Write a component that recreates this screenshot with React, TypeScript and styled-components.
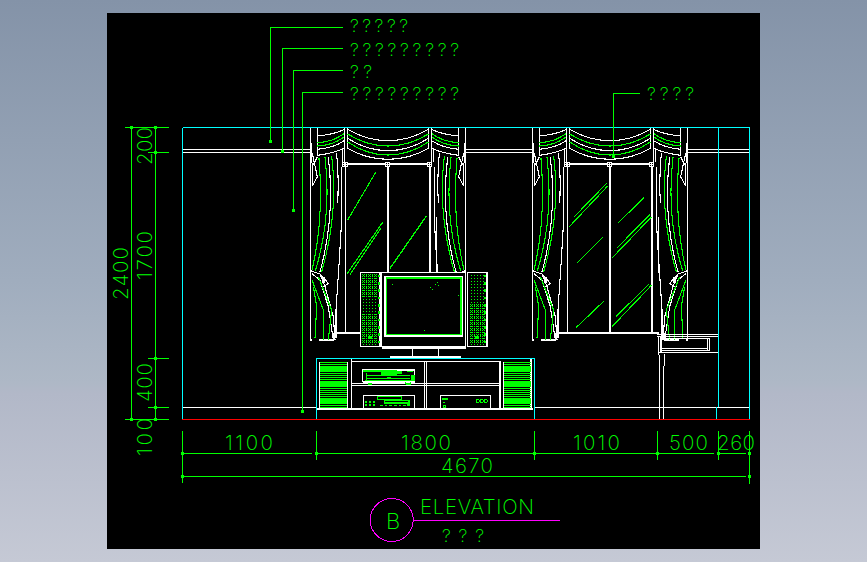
import React from "react";
import styled, { createGlobalStyle } from "styled-components";

const Global = createGlobalStyle`
  html, body { margin: 0; padding: 0; height: 100%; overflow: hidden; }
  #root { height: 100%; }
`;

const GREEN = "#00ff00";
const WHITE = "#ffffff";
const CYAN = "#00ffff";
const RED = "#ff0000";
const MAGENTA = "#ff00ff";

const Stage = styled.main`
  box-sizing: border-box;
  width: 867px;
  height: 562px;
  padding: 13px 107px;
  display: flex;
  background: linear-gradient(180deg, #8493a8 0%, #a0adbe 50%, #aeb8c6 68%, #b2b8c8 70%, #c5c9d5 100%);
`;

const Viewport = styled.section`
  flex: 1;
  background: #000000;
  display: flex;
`;

const Drawing = styled.svg`
  display: block;
  width: 653px;
  height: 536px;
  shape-rendering: crispEdges;
`;

const Wire = styled.path<{ $c?: string; $w?: number }>`
  fill: none;
  stroke: ${(p) => p.$c ?? WHITE};
  stroke-width: ${(p) => p.$w ?? 1};
`;

const Block = styled.rect<{ $c?: string }>`
  fill: ${(p) => p.$c ?? GREEN};
`;

const Box = styled.rect<{ $c?: string; $w?: number }>`
  fill: #000000;
  stroke: ${(p) => p.$c ?? WHITE};
  stroke-width: ${(p) => p.$w ?? 3.3};
`;

const Ring = styled.circle<{ $c?: string }>`
  fill: none;
  stroke: ${(p) => p.$c ?? GREEN};
  stroke-width: 3.3;
`;

const Label = styled.text<{ $s?: number }>`
  font-family: "Inter", "Liberation Sans", sans-serif;
  font-weight: 200;
  font-size: ${(p) => p.$s ?? 20.5}px;
  fill: ${GREEN};
`;

const Zoomed: React.FC<{ x: number; y: number; children: React.ReactNode }> = ({ x, y, children }) => (
  <g transform={`translate(${x} ${y}) scale(0.33333)`}>{children}</g>
);

const Dot: React.FC<{ x: number; y: number }> = ({ x, y }) => (
  <Block x={Math.floor(x) - 1} y={Math.floor(y) - 1} width={3} height={3} />
);

const Finial: React.FC<{ x: number; y: number }> = ({ x, y }) => (
  <g>
    <Block $c={WHITE} x={x - 8} y={y - 8} width={17} height={17} />
    {[-5, 3].map((a) =>
      [-5, 3].map((b) => <Block key={`${a}${b}`} $c="#000" x={x + a} y={y + b} width={3} height={3} />)
    )}
  </g>
);

const HalfDrape: React.FC = () => (
  <g>
    <Wire $w={3.3} d="M31 22V660M52 22V105M133 22V88M143 22V88M133 88V125M127 88V125" />
    <Wire $w={3.3} d="M52 47Q100 45 133 28M52 88Q100 84 133 62M52 106Q100 100 133 85" />
    <Wire $w={3.3} $c={GREEN} d="M52 68Q100 66 133 40M52 78Q100 76 133 50" />
    <Wire $w={3.3} d="M143 28Q200 62 264 62M143 55Q200 92 264 92M143 85Q200 118 264 118" />
    <Wire $w={3.3} $c={GREEN} d="M143 42Q200 78 264 78M143 66Q200 105 264 105" />
    <Wire $w={5} d="M34 70V130" />
    <Wire $w={3.3} d="M37 100L52 170L38 197L37 130M52 110L40 135" />
    <Wire $w={3.3} $c={GREEN} d="M57 115Q72 300 36 450M75 112Q96 290 46 452M95 108Q116 280 65 455" />
    <Wire $w={3.3} d="M85 110Q106 290 60 455M110 100Q118 200 112 250M125 140V300L118 420L108 570V655" />
    <Wire $w={3.3} d="M31 452L60 462L85 490L70 500M35 460L60 480L85 560L100 660M60 462L75 500L100 590L105 660" />
    <Block $c={WHITE} x={65} y={472} width={9} height={18} />
    <Wire $w={3.3} d="M31 660H37M58 660H100V640" />
    <Wire $w={3.3} $c={GREEN} d="M36 480L70 570V660M55 470L95 570L85 660M40 500L50 560L45 655" />
  </g>
);

const WindowBay: React.FC<{ x: number }> = ({ x }) => (
  <Zoomed x={x} y={120}>
    <HalfDrape />
    <g transform="translate(528 0) scale(-1 1)">
      <HalfDrape />
    </g>
    <Wire $w={3.3} d="M137 125V640" />
    <Wire $w={6} d="M135 133H392M264 133V640M390 133V640M110 640H412" />
    <Wire $w={5} d="M410 290V460" />
    <Finial x={135} y={133} />
    <Finial x={262} y={133} />
    <Finial x={388} y={133} />
  </Zoomed>
);

const Speaker: React.FC<{ x: number; dense: [number, number][]; edge: number; big: number }> = ({ x, dense, edge, big }) => (
  <g>
    <Box x={x} y={37} width={59} height={223} />
    <rect x={x + 6} y={40} width={48} height={216} fill="url(#sparse)" />
    {dense.map(([top, h]) => (
      <rect key={top} x={x + 6} y={top} width={48} height={h} fill="url(#dense)" />
    ))}
    <Wire $w={6} $c={GREEN} strokeDasharray="8 14" d={`M${edge} 44V250`} />
    <Block x={big} y={227} width={12} height={9} />
  </g>
);

const louvers = Array.from({ length: 22 }, (_, i) => 308 + i * 6.4);

const App: React.FC = () => (
  <>
    <Global />
    <Stage>
      <Viewport>
        <Drawing viewBox="107 13 653 536" xmlns="http://www.w3.org/2000/svg">
          <defs>
            <pattern id="sparse" width="9" height="9" patternUnits="userSpaceOnUse">
              <rect width="3" height="3" fill={GREEN} />
            </pattern>
            <pattern id="dense" width="6" height="6" patternUnits="userSpaceOnUse">
              <rect width="3" height="3" fill={GREEN} />
            </pattern>
          </defs>

          {/* room outline */}
          <Wire d="M182 149.5H310M182 152.5H310M466 149.5H533M466 152.5H533M688 149.5H750M688 152.5H750M182 407.5H317M534 407.5H750" />
          <WindowBay x={300} />
          <WindowBay x={522} />

          {/* glass reflections */}
          <Zoomed x={300} y={120}>
            <Wire $w={3.3} $c={GREEN} d="M143 300L227 157M140 463L248 307M150 463L242 325" />
            <Wire $w={4} $c={GREEN} d="M270 445L380 287" />
          </Zoomed>
          <Zoomed x={520} y={120}>
            <Wire $w={3.3} $c={GREEN} d="M148 320L263 198M163 290L260 190M172 428L248 352M295 308L373 232M277 413L395 290M292 383L390 283M168 623L252 543M276 620L395 495M288 590L387 492" />
          </Zoomed>

          {/* television, speakers, cabinet */}
          <Zoomed x={300} y={260}>
            <Speaker x={181} dense={[[40, 70], [160, 90]]} edge={236} big={204} />
            <Speaker x={502} dense={[[130, 120]]} edge={556} big={526} />
            <Box x={245} y={37} width={252} height={223} />
            <Box x={255} y={50} width={232} height={178} />
            <Box $c={GREEN} $w={4} x={259} y={54} width={224} height={170} />
            {[[277, 73], [391, 82], [397, 88], [406, 72], [412, 67], [415, 75], [475, 106], [373, 211]].map(([x, y]) => (
              <Block key={`${x}-${y}`} x={x} y={y} width={3} height={3} />
            ))}
            <Box x={248} y={262} width={247} height={4} />
            <Wire $w={3.3} d="M337 266V290M415 266V290M270 291H483" />

            <Wire $w={3.3} $c={CYAN} d="M49 477V295H703V477" />
            <Wire $w={3.3} d="M52 447H700M58 305V447M142 305V447M155 296V447M610 305V447M693 296V447M600 304V447M155 304H600M155 371H598M155 376H598M373 304V447M379 304V447" />
            {louvers.map((y) => (
              <Wire key={y} $w={4.2} $c={GREEN} d={`M60 ${y}H141M612 ${y}H692`} />
            ))}

            <Wire $w={3.3} d="M187 365V330H344V366" />
            <Wire $w={5} d="M190 366H344" />
            <Block x={190} y={331} width={100} height={5} />
            <Block x={243} y={337} width={47} height={7} />
            <Block x={290} y={333} width={15} height={9} />
            <Block x={320} y={333} width={20} height={4} />
            <Wire $w={3.3} $c={GREEN} d="M200 347H330M200 355H330M195 362H335M200 340V360" />
            <Block x={262} y={350} width={11} height={8} />
            <Block x={332} y={344} width={12} height={20} />
            <Wire $w={3.3} $c={GREEN} d="M205 372H216M317 372V365M317 372H331V365" />

            <Wire $w={3.3} d="M190 445V406H344V445" />
            <Wire $w={3.3} $c={GREEN} d="M232 419V410H304V419ZM253 429V421H327V429Z" />
            <Wire $w={3.3} $c={GREEN} strokeDasharray="8 6" d="M240 436H320" />
            {[195, 206, 218].map((x) => (
              <g key={x}>
                <Block x={x} y={423} width={7} height={6} />
                <Block x={x} y={433} width={7} height={6} />
              </g>
            ))}
            <Block x={322} y={432} width={8} height={6} />

            <Wire $w={3.3} d="M421 445V406H572V445" />
            <Block x={426} y={414} width={18} height={6} />
            <Block x={429} y={426} width={6} height={3} />
            <Wire $w={3.3} $c={GREEN} d="M430 436H436V442H430Z" />
            <Ring cx={533} cy={423} r={5} />
            <Ring cx={545} cy={423} r={5} />
            <Ring cx={557} cy={423} r={5} />
          </Zoomed>

          {/* side desk */}
          <Zoomed x={520} y={280}>
            <Wire $w={3.3} d="M412 163H595M412 170H595M415 170V225M423 170V218M422 175H568V211H422M563 175V211M422 205H562M433 222V258M418 225V418M431 258V420" />
            <Wire $w={5} d="M415 218H595" />
          </Zoomed>

          {/* model limits */}
          <Wire $c={RED} d="M182 419.5H750" />
          <Wire $c={CYAN} d="M182.5 127.5H749.5V419M182.5 127.5V419M718.5 127.5V407M716.5 407V419" />

          {/* leaders */}
          <Wire $c={GREEN} d="M343 27.5H270.5V141M343 48.5H282.5V151M343 70.5H293.5V210M343 92.5H302.5V411M640 93.5H613.5V156" />
          <Dot x={270.5} y={141} />
          <Dot x={282.5} y={151} />
          <Dot x={293.5} y={210} />
          <Dot x={302.5} y={411} />
          <Dot x={613.5} y={156} />
          <Label $s={18} x={350} y={32} textLength={58}>?????</Label>
          <Label $s={18} x={350} y={56} textLength={109}>?????????</Label>
          <Label $s={18} x={350} y={78} textLength={22}>??</Label>
          <Label $s={18} x={350} y={100} textLength={109}>?????????</Label>
          <Label $s={18} x={647} y={100} textLength={47}>????</Label>

          {/* vertical dimensions */}
          <Wire $c={GREEN} d="M131.5 127V419M155.5 127V419M125 127.5H169M148 152.5H169M148 358.5H169M148 407.5H169M125 419.5H169" />
          <Dot x={131.5} y={127.5} />
          <Dot x={155.5} y={127.5} />
          <Dot x={155.5} y={152.5} />
          <Dot x={155.5} y={358.5} />
          <Dot x={155.5} y={407.5} />
          <Dot x={131.5} y={419.5} />
          <Dot x={155.5} y={419.5} />
          <Label transform="rotate(-90 128 300)" x={128} y={300} textLength={53}>2400</Label>
          <Label transform="rotate(-90 152 280)" x={152} y={280} textLength={49}>1700</Label>
          <Label transform="rotate(-90 152 165)" x={152} y={165} textLength={38}>200</Label>
          <Label transform="rotate(-90 152 402)" x={152} y={402} textLength={39}>400</Label>
          <Label transform="rotate(-90 152 456)" x={152} y={456} textLength={38}>100</Label>

          {/* horizontal dimensions */}
          <Wire $c={GREEN} d="M182 453.5H312M316 453.5H714M718 453.5H746M182 476.5H746M182.5 431V483M316.5 431V460M534.5 431V460M657.5 431V460M718.5 431V460M749.5 431V484" />
          <Dot x={182.5} y={453.5} />
          <Dot x={316.5} y={453.5} />
          <Dot x={534.5} y={453.5} />
          <Dot x={657.5} y={453.5} />
          <Dot x={718.5} y={453.5} />
          <Dot x={749.5} y={453.5} />
          <Dot x={182.5} y={476.5} />
          <Dot x={749.5} y={476.5} />
          <Label x={225} y={450} textLength={48}>1100</Label>
          <Label x={401} y={450} textLength={50}>1800</Label>
          <Label x={573} y={450} textLength={47}>1010</Label>
          <Label x={669} y={450} textLength={39}>500</Label>
          <Label x={717} y={450} textLength={38}>260</Label>
          <Label x={441} y={473} textLength={52}>4670</Label>

          {/* title block */}
          <circle cx={391.7} cy={520} r={21.5} fill="none" stroke={MAGENTA} />
          <Wire $c={MAGENTA} d="M413 520.5H560" />
          <Label x={386} y={529} $s={22}>B</Label>
          <Label x={420} y={514} textLength={114}>ELEVATION</Label>
          <Label $s={18} x={442} y={542} textLength={42}>???</Label>
        </Drawing>
      </Viewport>
    </Stage>
  </>
);

export default App;
